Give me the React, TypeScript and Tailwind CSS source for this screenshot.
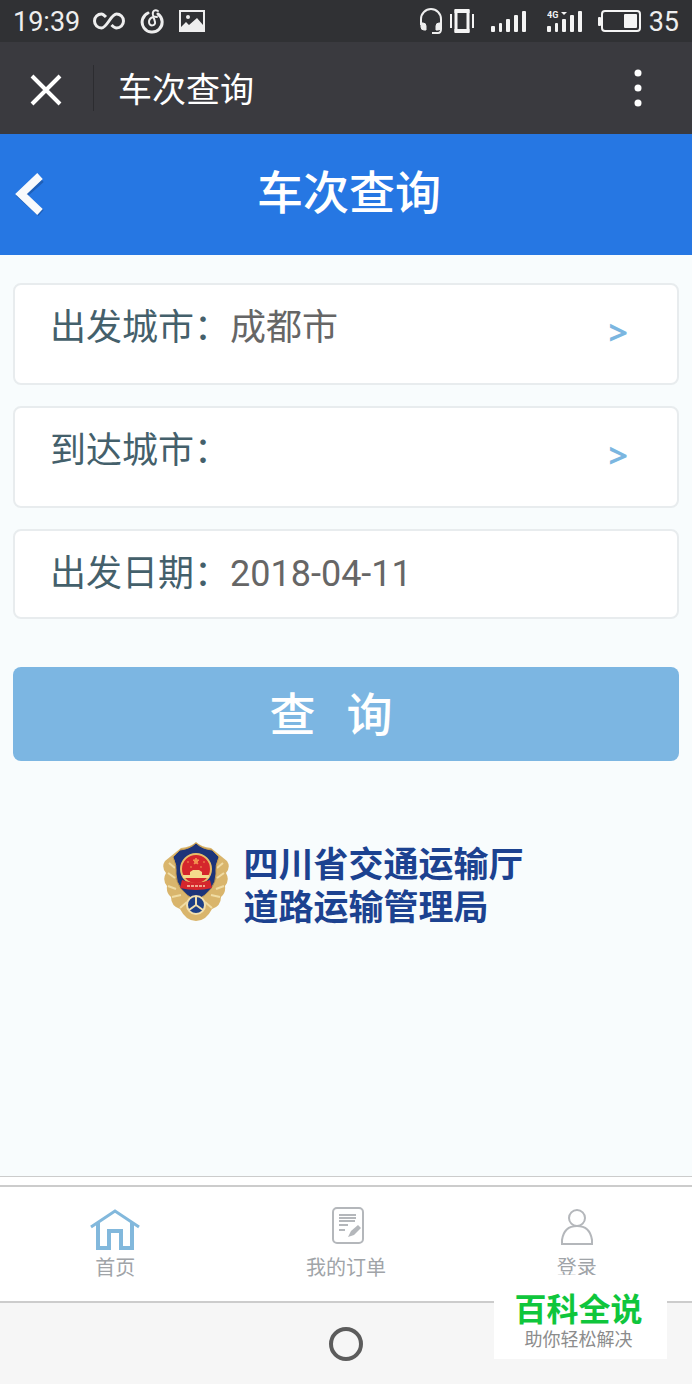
import React from 'react';

interface CityFieldProps {
  id: string;
  label: string;
  value: string;
}

const HeadsetIcon = () => (
  <svg width="24" height="28" viewBox="0 0 24 28" fill="none" stroke="#eee" strokeWidth="2">
    <path d="M2 18v-6a10 10 0 0 1 20 0v10q0 4-3 4h-6" />
    <path d="M2 16h2q3 0 3 3v4H5q-3 0-3-3zM22 16h-2q-3 0-3 3v4h2q3 0 3-3z" fill="#eee" strokeWidth="1" />
  </svg>
);

const VibrateIcon = () => (
  <svg width="24" height="26" viewBox="0 0 24 26" fill="none" stroke="#f4f4f4">
    <path d="M1 6v14M23 6v14" strokeWidth="2" />
    <path d="M4.500 3h15M4.500 23h15" strokeWidth="4" />
    <path d="M6 2v22M18 2v22" strokeWidth="3" />
  </svg>
);

const SignalIcon = ({ label }: { label?: string }) => (
  <svg width="36" height="24" viewBox="0 0 36 24" fill="#f4f4f4">
    <rect x="0" y="17" width="4" height="6" rx="1" />
    <rect x="8" y="14" width="3" height="9" rx="1" />
    <rect x="15" y="10" width="4" height="13" rx="1" />
    <rect x="23" y="6" width="4" height="17" rx="1" />
    <rect x="31" y="2" width="4" height="21" rx="1" />
    {label && <text x="0" y="9" fontSize="9" fontWeight="700">{label}</text>}
    {label && <path d="M14 3h6l-3 3z" />}
  </svg>
);

const BatteryIcon = () => (
  <svg width="44" height="24" viewBox="0 0 44 24" fill="none">
    <rect x="4" y="2" width="38" height="20" rx="3" stroke="#f4f4f4" strokeWidth="2" />
    <rect x="0" y="8" width="3" height="9" rx="1" fill="#f4f4f4" />
    <rect x="26" y="5" width="13" height="14" rx="1" fill="#f4f4f4" />
  </svg>
);

const StatusBar = () => (
  <div className="flex h-[42px] items-center justify-between bg-[#303134] pl-[13px] pr-[13px] text-[27px] leading-[42px] text-[#eee]">
    <div className="flex items-center">
      <span className="pt-px">19:39</span>
      <svg className="ml-[13px]" width="32" height="18" viewBox="0 0 32 18" fill="none" stroke="#eee" strokeWidth="3">
        <path d="M13 5C11 3 10 2 8.500 2a7 7 0 0 0 0 14C14 16 18 2 23.500 2a7 7 0 0 1 0 14c-2 0-3-1-5-3" />
      </svg>
      <svg className="ml-[15px]" width="24" height="26" viewBox="0 0 24 26" fill="none" stroke="#eee" strokeWidth="2" strokeLinecap="round">
        <path d="M8 5A10 10 0 1 0 18 6" strokeWidth="3" />
        <path d="M18 3c-3-2-6 0-5 4l2 7c1 4-6 5-6 0 0-4 4-6 8-5" strokeWidth="2" />
      </svg>
      <svg className="ml-[15px]" width="26" height="22" viewBox="0 0 26 22">
        <rect x="1" y="1" width="24" height="20" fill="none" stroke="#eee" strokeWidth="2" />
        <path d="M2 20v-3l5-5 3 3 8-7 6 7v5z" fill="#eee" />
        <circle cx="9" cy="7" r="2" fill="#eee" />
      </svg>
    </div>
    <div className="flex items-center">
      <HeadsetIcon />
      <span className="ml-[7px]"><VibrateIcon /></span>
      <span className="ml-[17px]"><SignalIcon /></span>
      <span className="ml-5"><SignalIcon label="4G" /></span>
      <span className="ml-[15px]"><BatteryIcon /></span>
      <span className="ml-[7px] pt-px">35</span>
    </div>
  </div>
);

const BrowserBar = () => (
  <div className="flex h-[92px] items-center bg-[#3a3a3f] text-white">
    <button aria-label="关闭" className="ml-[30px] mt-1">
      <svg width="32" height="32" viewBox="0 0 32 32" stroke="#fff" strokeWidth="4">
        <path d="M2 2l28 28M30 2L2 30" />
      </svg>
    </button>
    <div className="ml-[31px] h-[46px] w-px bg-[#2c2c30]" />
    <span className="ml-6 pt-1 text-[34px] leading-[48px]">车次查询</span>
    <button aria-label="更多" className="ml-auto mr-[50px]">
      <svg width="8" height="38" viewBox="0 0 8 38" fill="#fff">
        <circle cx="4" cy="4" r="3.500" />
        <circle cx="4" cy="19" r="3.500" />
        <circle cx="4" cy="34" r="3.500" />
      </svg>
    </button>
  </div>
);

const CityField: React.FC<CityFieldProps> = ({ id, label, value }) => (
  <div className="flex h-[102px] items-start rounded-lg border-2 border-[#e8ecee] bg-white pl-[35px] pr-[49px] pt-[17px]">
    <label htmlFor={id} className="text-[36px] leading-[52px] text-[#44606b]">{label}</label>
    <input
      id={id}
      defaultValue={value}
      readOnly
      className="min-w-0 flex-1 text-[36px] leading-[52px] text-[#666] outline-none"
    />
    <button aria-label="选择城市" className="mt-2 font-['Open_Sans'] text-[34px] font-bold leading-[44px] text-[#7bb6e0]">
      &gt;
    </button>
  </div>
);

const Emblem = () => (
  <svg width="68" height="82" viewBox="0 0 68 82">
    <path
      d="M34 1q-5 5-15 6L3 20q-4 6 1 12-4 7 1 13-1 7 4 11 0 9 9 12 6 12 16 12t16-12q9-3 9-12 5-4 4-11 5-6 1-13 5-6 1-12L49 7Q39 6 34 1z"
      fill="#d9b56c"
    />
    <path d="M6 32l7 5M6 45l8 3M10 56l9-2M18 67l7-6M62 32l-7 5M62 45l-8 3M58 56l-9-2M50 67l-7-6M7 22l6 5M61 22l-6 5" stroke="#f0dca4" strokeWidth="2" />
    <path d="M34 2q-6 6-16 7-4 4-7 7 4 8 3 17 0 16 20 27 20-11 20-27-1-9 3-17l-7-7Q40 8 34 2z" fill="#1d3479" stroke="#c79d52" strokeWidth="1" />
    <circle cx="34" cy="28" r="15" fill="#d5262c" stroke="#e8bd69" strokeWidth="2" />
    <path d="M28 34v-3l3-2h6l3 2v3h7v3H21v-3z" fill="#f4d98c" />
    <path d="M34 17l1 2h2l-2 2 1 2-2-1-2 1 1-2-2-2h2zM25 21h2M41 21h2M28 26h2M38 26h2" fill="#f2914f" stroke="#f2914f" />
    <path d="M20 39q14 5 28 0l2 8q-16 4-32 0z" fill="#d5262c" />
    <path d="M25 45h18" stroke="#f0a48c" strokeWidth="2" strokeDasharray="3 1" />
    <circle cx="34" cy="64" r="9" fill="#1d3f86" stroke="#f1dfae" strokeWidth="2" />
    <path d="M34 55v9l-7 5M34 64l7 5" fill="none" stroke="#f1dfae" strokeWidth="2" />
  </svg>
);

const TabBar = () => (
  <footer>
    <div className="h-[11px] border-b-2 border-t border-[#ccc] bg-white" />
    <nav className="grid h-[114px] grid-cols-3 bg-white text-[20px] leading-[30px] text-[#a0a4a8]">
      <a href="#home" className="flex flex-col items-center pt-5">
        <svg width="50" height="46" viewBox="0 0 50 46" fill="none" stroke="#82b8dc" strokeWidth="4">
          <path d="M1 20L25 4l24 16" strokeWidth="3" />
          <path d="M8 16v25h11V24h12v17h11V16" />
        </svg>
        首页
      </a>
      <a href="#orders" className="flex flex-col items-center pt-[18px]">
        <svg className="mb-2 ml-1" width="32" height="40" viewBox="0 0 32 40" fill="none" stroke="#b4b7bb" strokeWidth="2">
          <rect x="1" y="3" width="30" height="35" rx="4" />
          <path d="M7 10h17M7 13h17M7 16h16M7 20h9M7 25h6" />
          <path d="M16 32l3-6 7-6 3 3-7 7z" fill="#b4b7bb" stroke="none" />
        </svg>
        我的订单
      </a>
      <a href="#login" className="flex flex-col items-center pt-[22px]">
        <svg className="mb-2" width="34" height="36" viewBox="0 0 34 36" fill="none" stroke="#b4b7bb" strokeWidth="2">
          <circle cx="17" cy="9" r="8" />
          <path d="M2 35v-4q2-14 15-14t15 14v4z" />
        </svg>
        登录
      </a>
    </nav>
    <div className="flex h-[83px] items-center justify-center border-t-2 border-[#ccc] bg-[#f6f6f6]">
      <button aria-label="主屏幕" className="size-[34px] rounded-full border-4 border-[#5c5c5c]" />
    </div>
  </footer>
);

export default function App() {
  return (
    <div className="flex min-h-screen flex-col bg-[#f8fcfd] font-[Roboto,'Noto_Sans_CJK_SC',sans-serif]">
      <StatusBar />
      <BrowserBar />
      <header className="grid h-[121px] grid-cols-[60px_1fr_54px] items-center bg-[#2677e3] text-white">
        <button aria-label="返回" className="ml-[14px]">
          <svg width="32" height="48" viewBox="0 0 32 48" fill="none">
            <path d="M27 8L8 25l19 17" stroke="#1e5fb8" strokeWidth="8" />
            <path d="M26 5L7 23l19 18" stroke="#f8fafc" strokeWidth="8" />
          </svg>
        </button>
        <h1 className="pb-1 text-center text-[46px] font-medium leading-[66px]">车次查询</h1>
      </header>

      <main className="flex-1 px-[13px] pt-7">
        <form className="flex flex-col" onSubmit={(e) => e.preventDefault()}>
          <div className="flex flex-col gap-[21px]">
            <CityField id="from" label="出发城市：" value="成都市" />
            <CityField id="to" label="到达城市：" value="" />
            <div className="flex h-[90px] items-start rounded-lg border-2 border-[#e8ecee] bg-white pl-[35px] pr-[49px] pt-[17px]">
              <label htmlFor="date" className="text-[36px] leading-[52px] text-[#44606b]">出发日期：</label>
              <input
                id="date"
                defaultValue="2018-04-11"
                className="min-w-0 flex-1 text-[36px] leading-[52px] text-[#666] outline-none"
              />
            </div>
          </div>
          <button
            type="submit"
            className="mt-12 h-[94px] rounded-lg bg-[#7cb6e2] pb-1.5 pr-[30px] font-['Noto_Sans_CJK_SC',sans-serif] text-[46px] font-medium leading-[66px] text-white"
          >
            查&nbsp;&nbsp;&nbsp;询
          </button>
        </form>

        <div className="mt-20 flex items-start justify-center pr-1.5">
          <Emblem />
          <p className="ml-[13px] pt-[3px] text-[35px] font-bold leading-[43px] text-[#1c4290]">
            四川省交通运输厅
            <br />
            道路运输管理局
          </p>
        </div>
      </main>

      <TabBar />

      <aside className="fixed bottom-[25px] right-[25px] flex h-[84px] w-[173px] flex-col items-center bg-white pr-1 pt-[15px]">
        <strong className="text-[32px] font-bold leading-[40px] text-[#0fc63c]">百科全说</strong>
        <span className="text-[18px] leading-5 text-[#8c8c8c]">助你轻松解决</span>
      </aside>
    </div>
  );
}
